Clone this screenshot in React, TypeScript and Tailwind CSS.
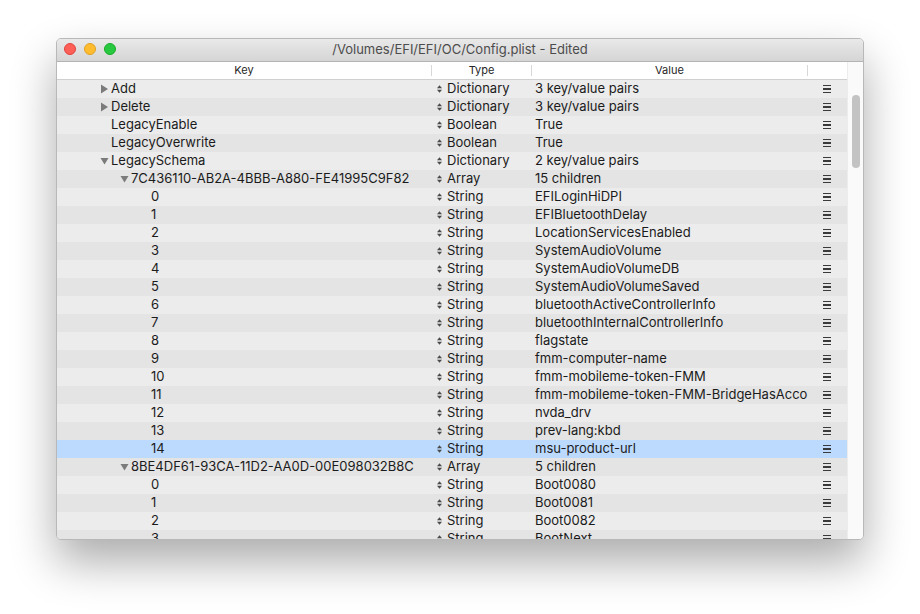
type Row = {
  key: string;
  level: number;
  disclosure?: "open" | "closed";
  type: string;
  value: string;
  selected?: boolean;
};

const ROWS: Row[] = [
  { key: "Add", level: 0, disclosure: "closed", type: "Dictionary", value: "3 key/value pairs" },
  { key: "Delete", level: 0, disclosure: "closed", type: "Dictionary", value: "3 key/value pairs" },
  { key: "LegacyEnable", level: 0, type: "Boolean", value: "True" },
  { key: "LegacyOverwrite", level: 0, type: "Boolean", value: "True" },
  { key: "LegacySchema", level: 0, disclosure: "open", type: "Dictionary", value: "2 key/value pairs" },
  { key: "7C436110-AB2A-4BBB-A880-FE41995C9F82", level: 1, disclosure: "open", type: "Array", value: "15 children" },
  { key: "0", level: 2, type: "String", value: "EFILoginHiDPI" },
  { key: "1", level: 2, type: "String", value: "EFIBluetoothDelay" },
  { key: "2", level: 2, type: "String", value: "LocationServicesEnabled" },
  { key: "3", level: 2, type: "String", value: "SystemAudioVolume" },
  { key: "4", level: 2, type: "String", value: "SystemAudioVolumeDB" },
  { key: "5", level: 2, type: "String", value: "SystemAudioVolumeSaved" },
  { key: "6", level: 2, type: "String", value: "bluetoothActiveControllerInfo" },
  { key: "7", level: 2, type: "String", value: "bluetoothInternalControllerInfo" },
  { key: "8", level: 2, type: "String", value: "flagstate" },
  { key: "9", level: 2, type: "String", value: "fmm-computer-name" },
  { key: "10", level: 2, type: "String", value: "fmm-mobileme-token-FMM" },
  { key: "11", level: 2, type: "String", value: "fmm-mobileme-token-FMM-BridgeHasAccount" },
  { key: "12", level: 2, type: "String", value: "nvda_drv" },
  { key: "13", level: 2, type: "String", value: "prev-lang:kbd" },
  { key: "14", level: 2, type: "String", value: "msu-product-url", selected: true },
  { key: "8BE4DF61-93CA-11D2-AA0D-00E098032B8C", level: 1, disclosure: "open", type: "Array", value: "5 children" },
  { key: "0", level: 2, type: "String", value: "Boot0080" },
  { key: "1", level: 2, type: "String", value: "Boot0081" },
  { key: "2", level: 2, type: "String", value: "Boot0082" },
  { key: "3", level: 2, type: "String", value: "BootNext" },
];

// key text lands at 54 / 74 / 94 px from the table's left edge
const INDENT = ["pl-[43px]", "pl-[63px]", "pl-[83px]"];

function Disclosure({ dir }: { dir: "open" | "closed" }) {
  return (
    <svg width="10" height="10" viewBox="0 0 10 10" className="mr-[1px] shrink-0">
      {dir === "closed" ? (
        <path d="M1 0.5 L8 5 L1 9.5 Z" fill="#7b7b7b" />
      ) : (
        <path d="M0.5 2 L8.5 2 L4.5 8.5 Z" fill="#7b7b7b" />
      )}
    </svg>
  );
}

function Stepper() {
  return (
    <svg width="5" height="8" viewBox="0 0 5 8" className="mr-[5px] shrink-0">
      <path d="M0 3.2 L2.5 0.3 L5 3.2 Z" fill="#4a4a4a" />
      <path d="M0 4.8 L2.5 7.7 L5 4.8 Z" fill="#4a4a4a" />
    </svg>
  );
}

function MenuGlyph() {
  return (
    <div className="flex flex-col gap-[2px]">
      <div className="h-[1.5px] w-[8px] bg-[#3a3a3a]" />
      <div className="h-[1.5px] w-[8px] bg-[#3a3a3a]" />
      <div className="h-[1.5px] w-[8px] bg-[#3a3a3a]" />
    </div>
  );
}

export default function App() {
  return (
    <div
      className="h-[614px] w-[920px] overflow-hidden bg-white pl-[56px] pt-[38px]"
      style={{ fontFamily: "Inter, 'Noto Sans', sans-serif" }}
    >
      <div className="flex h-[502px] w-[808px] flex-col overflow-hidden rounded-[5px] border border-[#b8b8b8] bg-[#f6f6f6] shadow-[0_22px_45px_rgba(0,0,0,0.33)]">
        {/* Title bar */}
        <div className="relative flex h-[23px] shrink-0 items-center justify-center border-b border-[#b3b3b3] bg-gradient-to-b from-[#e9e9e9] to-[#d5d5d5]">
          <div className="absolute left-[7px] top-[4px] flex gap-[8px]">
            <div className="h-[12px] w-[12px] rounded-full border border-[#e0443e] bg-[#fe5f57]" />
            <div className="h-[12px] w-[12px] rounded-full border border-[#dea123] bg-[#febc2e]" />
            <div className="h-[12px] w-[12px] rounded-full border border-[#1aab29] bg-[#28c840]" />
          </div>
          <span className="text-[13px] text-[#4c4c4c]">/Volumes/EFI/EFI/OC/Config.plist - Edited</span>
        </div>

        <div className="flex min-h-0 flex-1">
          {/* Table */}
          <div className="flex min-w-0 flex-1 flex-col overflow-hidden">
            <div className="flex h-[18px] shrink-0 items-center border-b border-[#cfcfcf] bg-white text-[11px] text-[#262626]">
              <div className="w-[374px] text-center">Key</div>
              <div className="h-[11px] w-px bg-[#d8d8d8]" />
              <div className="w-[99px] text-center">Type</div>
              <div className="h-[11px] w-px bg-[#d8d8d8]" />
              <div className="w-[275px] text-center">Value</div>
              <div className="h-[11px] w-px bg-[#d8d8d8]" />
              <div className="flex-1" />
            </div>
            {ROWS.map((r, i) => (
              <div
                key={i}
                className={`flex h-[18px] shrink-0 items-center text-[13px] text-[#1b1b1b] ${
                  r.selected ? "bg-[#bcdafd]" : i % 2 === 0 ? "bg-[#ececec]" : "bg-[#e4e4e4]"
                }`}
              >
                <div className={`flex w-[375px] shrink-0 items-center ${INDENT[r.level]}`}>
                  {r.disclosure ? <Disclosure dir={r.disclosure} /> : <div className="w-[11px] shrink-0" />}
                  <span className="whitespace-nowrap">{r.key}</span>
                </div>
                <div className="flex w-[100px] shrink-0 items-center pl-[5px]">
                  <Stepper />
                  <span>{r.type}</span>
                </div>
                <div className="w-[276px] shrink-0 overflow-hidden whitespace-nowrap pl-[3px]">{r.value}</div>
                <div className="flex flex-1 justify-center pr-[2px]">
                  <MenuGlyph />
                </div>
              </div>
            ))}
          </div>

          {/* Scrollbar */}
          <div className="flex w-[16px] shrink-0 justify-center border-l border-[#ececec] bg-[#fafafa] pt-[33px]">
            <div className="h-[73px] w-[8px] rounded-full bg-[#c3c3c3]" />
          </div>
        </div>
      </div>
    </div>
  );
}
